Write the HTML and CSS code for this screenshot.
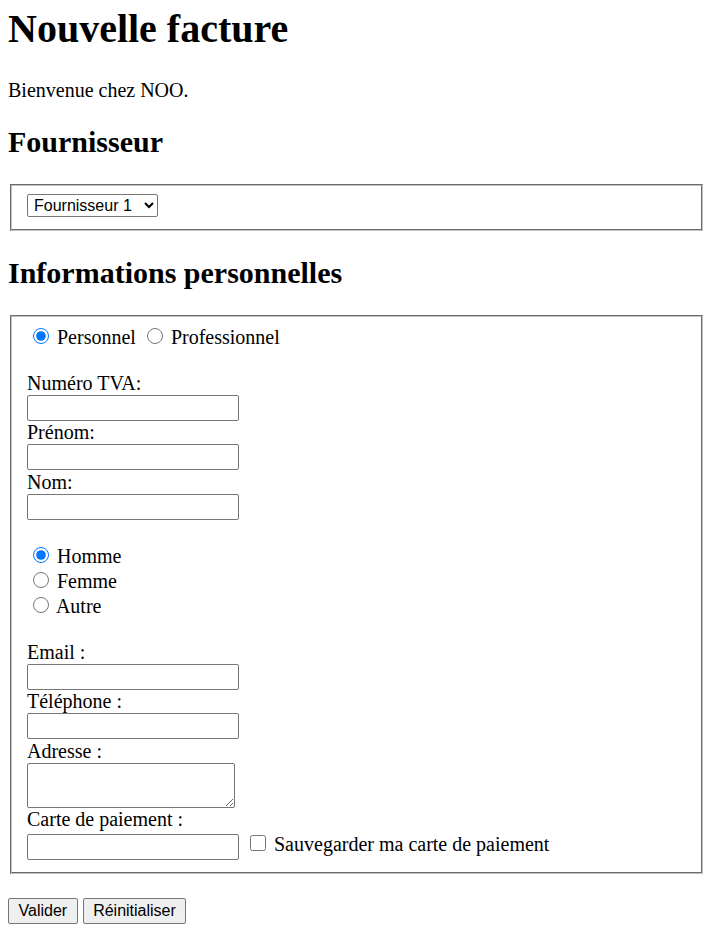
FILE: index.html
```html
<!DOCTYPE html>
<html lang="fr">
<head>
    <meta charset="UTF-8">
    <meta name="viewport" content="width=device-width, initial-scale=1.0">
    <title>Nouvelle facture</title>
    <link rel="stylesheet" href="styles.css">
</head>
<body>
    <h1>Nouvelle facture</h1>
    <p>Bienvenue chez NOO.</p>
    <form>
        <h2>Fournisseur</h2>
        <fieldset class="panel supplier-panel">
            <select class="supplier" name="fournisseur">
                <option>Fournisseur 1</option>
                <option>Fournisseur 2</option>
                <option>Fournisseur 3</option>
            </select>
        </fieldset>

        <h2>Informations personnelles</h2>
        <fieldset class="panel">
            <div class="choice">
                <input type="radio" name="type" id="perso" checked> <label for="perso">Personnel</label>
                <input type="radio" name="type" id="pro"> <label for="pro">Professionnel</label>
            </div>

            <div class="group">
                <label class="field-label" for="tva">Numéro TVA:</label>
                <input class="field" type="text" id="tva">
                <label class="field-label" for="prenom">Prénom:</label>
                <input class="field" type="text" id="prenom">
                <label class="field-label" for="nom">Nom:</label>
                <input class="field" type="text" id="nom">
            </div>

            <div class="group">
                <div class="choice"><input type="radio" name="genre" id="homme" checked> <label for="homme">Homme</label></div>
                <div class="choice"><input type="radio" name="genre" id="femme"> <label for="femme">Femme</label></div>
                <div class="choice"><input type="radio" name="genre" id="autre"> <label for="autre">Autre</label></div>
            </div>

            <div class="group">
                <label class="field-label" for="email">Email :</label>
                <input class="field" type="email" id="email">
                <label class="field-label" for="tel">Téléphone :</label>
                <input class="field" type="tel" id="tel">
                <label class="field-label" for="adresse">Adresse :</label>
                <textarea class="address" id="adresse"></textarea>
                <label class="field-label" for="carte">Carte de paiement :</label>
                <div class="card-row">
                    <input class="field inline" type="text" id="carte">
                    <input type="checkbox" id="save"> <label for="save">Sauvegarder ma carte de paiement</label>
                </div>
            </div>
        </fieldset>

        <div class="actions">
            <button type="submit">Valider</button>
            <button type="reset">Réinitialiser</button>
        </div>
    </form>
</body>
</html>
```

FILE: styles.css
```css
body {
    font-family: "Liberation Serif", "Times New Roman", serif;
    font-size: 20px;
    line-height: 23px;
    margin: 6px 1px 8px 8px;
    color: #000;
}
h1 {
    font-size: 40px;
    line-height: 46px;
    margin: 0 0 27px;
}
p {
    margin: 20px 0;
}
h2 {
    font-size: 30px;
    line-height: 34.5px;
    margin: 23px 0 24px;
}
.panel {
    margin: 0 2px;
    padding: 7px 15px 12.5px;
    border: 2px groove #c0c0c0;
}
.supplier-panel {
    margin-bottom: 25px;
}
input, select, button, textarea {
    font-family: "Liberation Sans", Arial, sans-serif;
    font-size: 16px;
}
.supplier {
    width: 131px;
    height: 23px;
    border: 1px solid #767676;
    border-radius: 2px;
    background: #fff;
    color: #000;
    padding: 0 2px;
}
.choice input, .card-row input[type="checkbox"] {
    width: 16px;
    height: 16px;
    margin: 4px 3px 0 6px;
}
.group {
    margin-top: 23px;
}
.field-label {
    display: block;
}
.field {
    display: block;
    box-sizing: border-box;
    width: 212px;
    height: 26px;
    margin: 0 0 0.5px;
    padding: 1px 2px;
    border: 1px solid #767676;
    border-radius: 2px;
}
.field.inline {
    display: inline-block;
    vertical-align: top;
    margin: 3px 0 0;
}
.address {
    display: block;
    box-sizing: border-box;
    width: 208px;
    height: 45px;
    margin: 0;
    border: 1px solid #767676;
    border-radius: 2px;
}
.card-row {
    height: 29px;
}
.actions {
    margin-top: 24px;
}
button {
    height: 26px;
    padding: 0 9.5px;
    color: #000;
    background: #efefef;
    border: 1px solid #767676;
    border-radius: 2px;
}
```
